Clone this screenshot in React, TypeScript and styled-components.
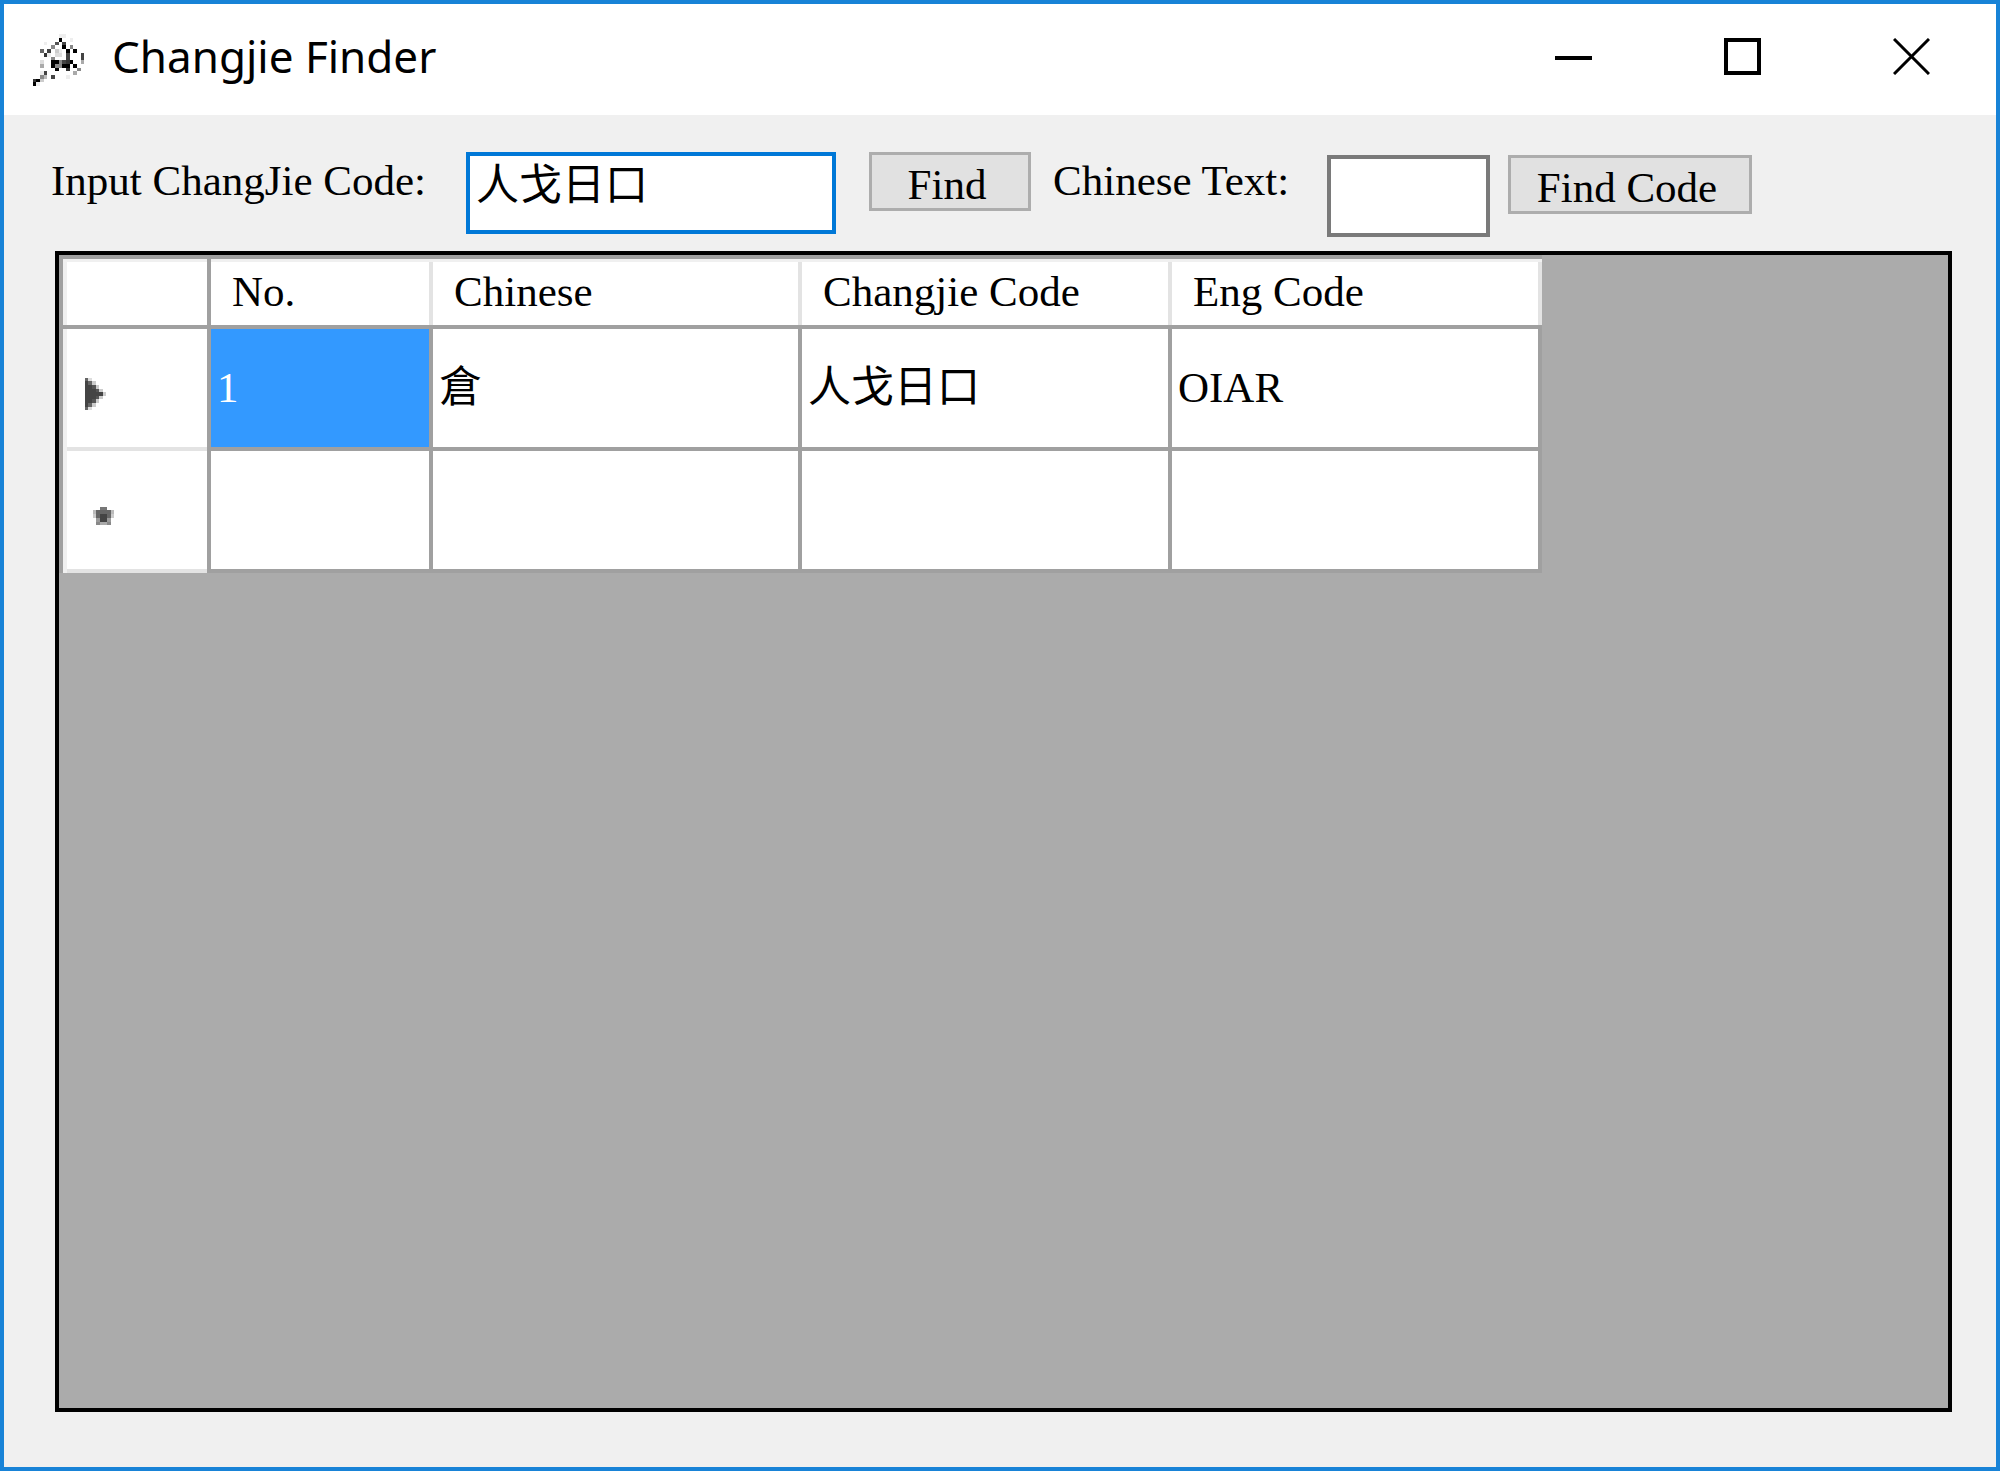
import React from "react";
import styled, { createGlobalStyle, css } from "styled-components";

const serif = `"Liberation Serif", "Noto Sans CJK TC", serif`;
const sans = `"Noto Sans", "Noto Sans CJK TC", sans-serif`;

const GlobalStyle = createGlobalStyle`
  *, *::before, *::after { box-sizing: border-box; }
  body { margin: 0; }
`;

const Window = styled.main`
  display: flex;
  flex-direction: column;
  min-height: 100vh;
  border: 4px solid #1883d7;
  background: #f0f0f0;
  color: #000;
  font-family: ${serif};
  font-size: 43px;
  line-height: 49px;
`;

const TitleBar = styled.header`
  display: flex;
  align-items: center;
  height: 111px;
  padding: 0 0 7px 25px;
  background: #fff;
`;

const Title = styled.h1`
  flex: 1;
  margin: 0 0 0 24px;
  font-family: ${sans};
  font-size: 44px;
  font-weight: 400;
  line-height: 60px;
  white-space: nowrap;
`;

const WindowButton = styled.button`
  display: flex;
  align-items: center;
  justify-content: center;
  width: 169px;
  height: 104px;
  padding: 0;
  border: 0;
  background: transparent;
`;

const Toolbar = styled.form`
  display: flex;
  align-items: flex-start;
  padding: 37px 44px 14px 47px;
`;

const Label = styled.label<{ $width: number }>`
  flex: none;
  width: ${(p) => p.$width}px;
  padding-top: 4px;
  white-space: nowrap;
`;

const Controls = styled.div<{ $gap: number; $top?: number }>`
  display: flex;
  align-items: flex-start;
  gap: ${(p) => p.$gap}px;
  margin-right: 22px;
  padding-top: ${(p) => p.$top ?? 0}px;
`;

const TextBox = styled.input<{ $width: number; $active?: boolean }>`
  width: ${(p) => p.$width}px;
  height: 82px;
  padding: 0 6px 24px;
  border: 4px solid ${(p) => (p.$active ? "#0078d7" : "#7a7a7a")};
  border-radius: 0;
  outline: 0;
  background: #fff;
  color: #000;
  font: inherit;
`;

const PushButton = styled.button<{ $width: number }>`
  width: ${(p) => p.$width}px;
  height: 59px;
  padding: 6px 6px 0 0;
  border: 3px solid #adadad;
  border-radius: 0;
  background: #e1e1e1;
  color: #000;
  font: inherit;
  line-height: 46px;
  white-space: nowrap;
`;

const GridPanel = styled.section`
  flex: 1;
  margin: 0 44px 55px 51px;
  border: 4px solid #000;
  background: #ababab;
`;

const Table = styled.table`
  width: 1483px;
  table-layout: fixed;
  border-collapse: separate;
  border-spacing: 0;
  border: solid #a0a0a0;
  border-width: 4px 0 0 4px;
  background: #fff;
`;

const Col = styled.col<{ $width: number }>`
  width: ${(p) => p.$width}px;
`;

const cell = css`
  text-align: left;
  vertical-align: middle;
  font-weight: 400;
  white-space: nowrap;
  border: 0 solid #a0a0a0;
`;

const CornerCell = styled.td`
  ${cell}
  height: 70px;
  padding: 0;
  border-width: 0 4px 4px 0;
  box-shadow: inset 4px 3px #f0f0f0;
`;

const ColumnHeader = styled.th`
  ${cell}
  height: 70px;
  padding: 0 0 2px 21px;
  border-bottom-width: 4px;
  box-shadow: inset 0 3px #f0f0f0, inset -4px 0 #e3e3e3;
`;

const RowHeader = styled.th<{ $indent: number }>`
  ${cell}
  height: 122px;
  padding: 7px 0 0 ${(p) => p.$indent}px;
  border-right-width: 4px;
  box-shadow: inset 4px 0 #f0f0f0, inset 0 -4px #e3e3e3;
`;

const Cell = styled.td<{ $selected?: boolean }>`
  ${cell}
  height: 122px;
  padding: 0 0 2px 6px;
  border-width: 0 4px 4px 0;
  background: ${(p) => (p.$selected ? "#3399ff" : "#fff")};
  color: ${(p) => (p.$selected ? "#fff" : "#000")};
`;

const Art = styled.svg`
  display: block;
  flex: none;
`;

// One hex digit per pixel gives its grey level; a dot is transparent.
function PixelArt({ rows, width, height }: { rows: string[]; width: number; height: number }) {
  return (
    <Art
      width={width}
      height={height}
      viewBox={`0 0 ${rows[0].length} ${rows.length}`}
      preserveAspectRatio="none"
      shapeRendering="crispEdges"
      aria-hidden="true"
    >
      {rows.flatMap((row, y) =>
        [...row].map((c, x) =>
          c === "." ? null : <rect key={`${x}-${y}`} x={x} y={y} width={1} height={1} fill={`#${c}${c}${c}`} />,
        ),
      )}
    </Art>
  );
}

const appIcon = [
  "................",
  "................",
  "........ee......",
  ".....f..0..e....",
  "....e..5.4......",
  "......8..0.8....",
  "...6.4.ce.0.0...",
  "....3e.dd.4...4.",
  "......8...4...4.",
  "...d..008430..a.",
  "...a..08800.0...",
  ".......0..3..8..",
  "...e4.......a...",
  "...8b.4...e.....",
  ".30c............",
  ".0e.............",
];

const currentRow = [
  "ff......",
  "f6d.....",
  "f46c....",
  "f445cf..",
  "f4445cf.",
  "f44444cf",
  "f4445cf.",
  "f445cf..",
  "f46c....",
  "f6d.....",
  "ff......",
];

const newRow = [
  ".ffffff.",
  ".ff77ff.",
  "fb6666bf",
  "fc6446cf",
  ".f9449f.",
  ".f8aa8f.",
  "..ffff..",
];

const columns = ["No.", "Chinese", "Changjie Code", "Eng Code"];
const result = ["1", "倉", "人戈日口", "OIAR"];

export default function App() {
  return (
    <>
      <GlobalStyle />
      <Window>
        <TitleBar>
          <PixelArt rows={appIcon} width={59} height={59} />
          <Title>Changjie Finder</Title>
          <WindowButton type="button" aria-label="Minimize">
            <Art width={37} height={37} viewBox="0 0 37 37">
              <path d="M0 20H37" stroke="#000" strokeWidth={4} />
            </Art>
          </WindowButton>
          <WindowButton type="button" aria-label="Maximize">
            <Art width={37} height={37} viewBox="0 0 37 37">
              <path d="M2 2H35V35H2Z" fill="none" stroke="#000" strokeWidth={4} />
            </Art>
          </WindowButton>
          <WindowButton type="button" aria-label="Close">
            <Art width={37} height={37} viewBox="0 0 37 37">
              <path d="M1 1L36 36M36 1L1 36" stroke="#000" strokeWidth={3} />
            </Art>
          </WindowButton>
        </TitleBar>

        <Toolbar onSubmit={(e) => e.preventDefault()}>
          <Label htmlFor="code" $width={415}>Input ChangJie Code:</Label>
          <Controls $gap={33}>
            <TextBox id="code" $width={370} $active defaultValue="人戈日口" />
            <PushButton type="submit" $width={162}>Find</PushButton>
          </Controls>
          <Label htmlFor="text" $width={274}>Chinese Text:</Label>
          <Controls $gap={18} $top={3}>
            <TextBox id="text" $width={163} />
            <PushButton type="button" $width={244}>Find Code</PushButton>
          </Controls>
        </Toolbar>

        <GridPanel>
          <Table>
            <colgroup>
              <Col $width={148} />
              <Col $width={222} />
              <Col $width={369} />
              <Col $width={370} />
              <Col $width={370} />
            </colgroup>
            <thead>
              <tr>
                <CornerCell />
                {columns.map((name) => (
                  <ColumnHeader key={name} scope="col">{name}</ColumnHeader>
                ))}
              </tr>
            </thead>
            <tbody>
              <tr>
                <RowHeader scope="row" $indent={18} aria-label="Current row">
                  <PixelArt rows={currentRow} width={29} height={40} />
                </RowHeader>
                {result.map((value, i) => (
                  <Cell key={columns[i]} $selected={i === 0}>{value}</Cell>
                ))}
              </tr>
              <tr>
                <RowHeader scope="row" $indent={26} aria-label="New row">
                  <PixelArt rows={newRow} width={29} height={26} />
                </RowHeader>
                {columns.map((name) => (
                  <Cell key={name} />
                ))}
              </tr>
            </tbody>
          </Table>
        </GridPanel>
      </Window>
    </>
  );
}
